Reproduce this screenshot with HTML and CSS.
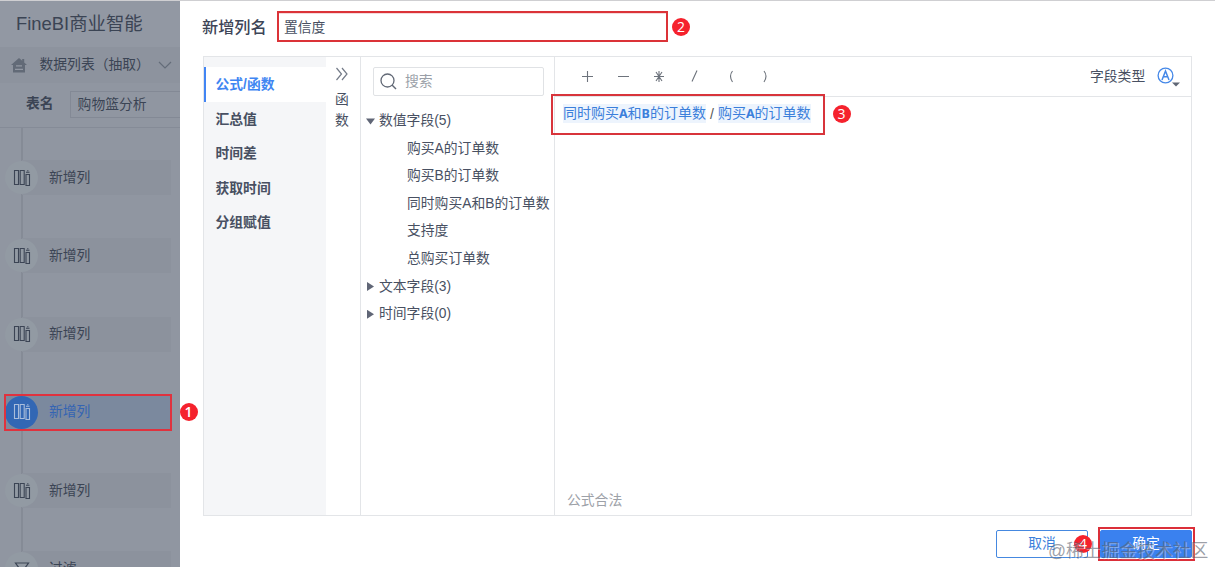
FILE: index.html
```html
<!DOCTYPE html>
<html lang="zh-CN">
<head>
<meta charset="utf-8">
<title>FineBI商业智能</title>
<link rel="stylesheet" href="styles.css">
</head>
<body>
<svg class="defs" aria-hidden="true">
  <symbol id="columns" viewBox="0 0 18 18"><path d="M1.500 1.500h4v14h-4zM7.200 1.500h4v14h-4zM13 5.500h3.500v11H13zM13 3.200h3.500M14.200 1.800h1.200" fill="none" stroke="currentColor" stroke-width="1.100"/></symbol>
</svg>
<div class="app">
  <aside class="sidebar">
    <div class="brand">FineBI商业智能</div>
    <div class="crumb">
      <svg class="home" viewBox="0 0 16 15"><path d="M8 0 0 7h2v7.500h12V7h2l-2.800-2.500V1h-2v1.800z" fill="currentColor"/><path d="M5 7.800h6M4 11.300h8" stroke="#9298a3" stroke-width="1.200"/></svg>
      <span class="crumb-text">数据列表（抽取）</span>
      <svg class="chev" viewBox="0 0 14 8"><path d="m1 1 6 6 6-6" fill="none" stroke="currentColor" stroke-width="1.200"/></svg>
    </div>
    <div class="table-name"><b>表名</b><span class="table-input">购物篮分析</span></div>
    <ul class="steps">
      <li><i><svg><use href="#columns"/></svg></i><span>新增列</span></li>
      <li><i><svg><use href="#columns"/></svg></i><span>新增列</span></li>
      <li><i><svg><use href="#columns"/></svg></i><span>新增列</span></li>
      <li class="active"><i><svg><use href="#columns"/></svg></i><span>新增列</span><em class="badge badge-1">1</em></li>
      <li><i><svg><use href="#columns"/></svg></i><span>新增列</span></li>
      <li><i><svg viewBox="0 0 18 18"><path d="M2.500 3h13L10.500 10v6l-3-2v-4z" fill="none" stroke="currentColor" stroke-width="1.200"/></svg></i><span>过滤</span></li>
    </ul>
  </aside>
  <main class="dialog">
    <header class="head"><h1>新增列名</h1><div class="name-input">置信度</div><em class="badge">2</em></header>
    <section class="panel">
      <nav class="menu">
        <a class="on">公式/函数</a><a>汇总值</a><a>时间差</a><a>获取时间</a><a>分组赋值</a>
      </nav>
      <div class="strip">
        <svg viewBox="0 0 14 14"><path d="m1.500 1 5 6-5 6M7 1l5 6-5 6" fill="none" stroke="currentColor" stroke-width="1.200"/></svg>
        <span>函</span><span>数</span>
      </div>
      <div class="fields">
        <div class="search"><svg viewBox="0 0 17 17"><circle cx="7.500" cy="7.500" r="6.500" fill="none" stroke="currentColor" stroke-width="1.300"/><path d="m12 12 4 4" stroke="currentColor" stroke-width="1.500"/></svg>搜索</div>
        <ul class="tree">
          <li><i class="open"></i>数值字段(5)</li>
          <li class="leaf">购买A的订单数</li>
          <li class="leaf">购买B的订单数</li>
          <li class="leaf">同时购买A和B的订单数</li>
          <li class="leaf">支持度</li>
          <li class="leaf">总购买订单数</li>
          <li><i class="closed"></i>文本字段(3)</li>
          <li><i class="closed"></i>时间字段(0)</li>
        </ul>
      </div>
      <div class="editor">
        <div class="toolbar">
          <svg class="ops" viewBox="0 0 214 20" fill="none" stroke="#6d737c" stroke-width="1.100"><path d="M12 9.500h11M17.500 4v11M48 9.500h11M84 9.500h10M86 5l6 9M92 5l-6 9M89 4v11M122 14.500l5-11"/><path d="M162.500 4q-4 5 0 11M194 4q4 5 0 11"/></svg>
          <span class="type">字段类型</span>
          <svg class="type-icon" viewBox="0 0 24 22"><circle cx="8.500" cy="8.500" r="7.400" fill="none" stroke="#4588e8" stroke-width="1.300"/><path d="m5 13 3.500-9L12 13M6.200 9.700h4.600" fill="none" stroke="#4588e8" stroke-width="1.500"/><path d="M15 15.500h8l-4 4z" fill="#606775"/></svg>
        </div>
        <div class="formula"><span>同时购买<b>A</b>和<b>B</b>的订单数</span><s>/</s><span>购买<b>A</b>的订单数</span></div>
        <div class="valid">公式合法</div>
        <div class="formula-mark"></div>
        <em class="badge badge-3">3</em>
      </div>
    </section>
    <footer class="actions">
      <button class="cancel">取消<em class="badge badge-4">4</em></button>
      <div class="ok-mark"><button class="ok">确定</button></div>
    </footer>
    <div class="watermark">@稀土掘金技术社区</div>
  </main>
</div>
</body>
</html>
```
FILE: styles.css
```css
* { box-sizing: border-box; }
body { margin: 0; overflow: hidden; font: 13.8px/20px "Liberation Sans", "Noto Sans CJK SC", sans-serif; color: #485062; }
ul { list-style: none; margin: 0; padding: 0; }
svg { display: block; flex: none; }
.defs { position: absolute; width: 0; height: 0; }
.app { display: flex; width: 1215px; height: 567px; border-top: 1px solid #cfcfd2; }

.sidebar { position: relative; z-index: 1; width: 180px; background: #9096a1; color: #3b4454; }
.brand { height: 46px; padding: 0 16px; font-size: 18.400px; line-height: 46px; background: #9298a3; white-space: nowrap; }
.crumb { height: 36px; display: flex; align-items: center; padding-left: 11px; background: #8d939e; }
.home { width: 16px; height: 15px; color: #626a77; }
.crumb-text { margin-left: 12.500px; width: 118px; white-space: nowrap; }
.chev { width: 14px; height: 8px; color: #646c79; }
.table-name { height: 45px; display: flex; align-items: center; padding-left: 26px; padding-bottom: 2px; border-bottom: 1px solid #858b97; }
.table-input { margin-left: 16px; flex: 1; height: 27px; padding-left: 7px; line-height: 25px; border: 1px solid #838995; border-right: 0; }
.steps { height: 438px; padding-top: 32px; display: flex; flex-direction: column; gap: 43.300px; overflow: visible; background: linear-gradient(#858b96, #858b96) 21px 0 / 2px 100% no-repeat; }
.steps li { flex: none; width: 166px; height: 35px; margin-left: 5px; display: flex; align-items: center; gap: 11px; background: linear-gradient(#8c929d, #8c929d) 17px 0 / 150px 35px no-repeat; }
.steps i { width: 33px; height: 33px; border-radius: 50%; background: #929aa3; display: flex; align-items: center; justify-content: center; }
.steps i svg { width: 18px; height: 18px; }
.steps .active { position: relative; background: #7b899e; color: #3464b3; outline: 2px solid #e0323e; outline-offset: -1px; }
.steps .active i { background: #3267b4; color: #a9bddb; }

.badge { display: block; width: 18px; height: 18px; border-radius: 50%; background: #f5222d; color: #fff; font: normal 14px/18px "Open Sans", sans-serif; text-align: center; }
.badge-1 { position: absolute; left: 174.500px; top: 8px; font-weight: 600; }
.badge-3 { position: absolute; left: 277.500px; top: 48px; }
.badge-4 { position: absolute; left: 77px; top: 4px; }

.dialog { position: relative; width: 1035px; padding: 10px 23px 0; background: #fff; }
.head { display: flex; align-items: center; height: 31px; margin-left: -1px; }
.head h1 { margin: 0; width: 75px; font-size: 16.200px; font-weight: 500; color: #3d4557; }
.name-input { width: 391px; height: 31px; padding-left: 5px; line-height: 29px; border: 2px solid #db3338; box-shadow: inset 0 1px #f6d9db; }
.head .badge { margin-left: 4px; }
.panel { display: flex; width: 989px; height: 460px; margin-top: 14px; border: 1px solid #e3e5e8; }
.menu { width: 122px; padding-top: 10px; background: #f5f6f8; }
.menu a { display: block; height: 34.500px; padding-left: 11.500px; line-height: 36px; font-weight: 600; }
.menu .on { color: #3f86f2; background: #fff; padding-left: 9.500px; border-left: 2px solid #4285f4; }
.strip { width: 35px; padding: 10px 2px 0 0; display: flex; flex-direction: column; align-items: center; border-right: 1px solid #e3e5e8; }
.strip svg { width: 14px; height: 14px; margin-bottom: 9px; color: #747b88; }
.strip span { height: 20.500px; line-height: 20px; }
.fields { width: 194px; padding-top: 10px; border-right: 1px solid #e3e5e8; }
.search { display: flex; align-items: center; gap: 8px; width: 171px; height: 29px; margin-left: 12px; padding-left: 6px; border: 1px solid #e0e2e5; border-radius: 2px; color: #9a9fa8; }
.search svg { width: 17px; height: 17px; color: #626976; }
.tree { padding-top: 11.200px; }
.tree li { height: 27.600px; display: flex; align-items: center; padding-left: 5px; white-space: nowrap; }
.tree .leaf { padding-left: 46px; }
.tree i { width: 9px; margin-right: 4px; height: 9px; background: #606676; }
.open { clip-path: polygon(0 2px, 100% 2px, 50% 8px); }
.closed { clip-path: polygon(1px 0, 8px 50%, 1px 100%); }
.editor { position: relative; flex: 1; display: flex; flex-direction: column; }
.toolbar { display: flex; align-items: center; height: 40px; padding-left: 15px; border-bottom: 1px solid #e3e5e8; }
.ops { width: 214px; height: 20px; }
.type { margin-left: 306px; padding-top: 1px; }
.type-icon { width: 24px; height: 22px; margin: 2px 0 0 12px; }
.formula { display: flex; align-items: center; height: 33px; padding-left: 8px; color: #3b7fdb; font-size: 14px; }
.formula span { height: 19px; line-height: 19px; background: #edf4fd; white-space: nowrap; }
.formula b { display: inline-block; width: 8.500px; text-align: center; font: bold 12.500px/18px "Noto Sans", sans-serif; }
.formula s { width: 12px; text-align: center; color: #555; text-decoration: none; }
.formula-mark { position: absolute; left: -4px; top: 37px; width: 274px; height: 41px; border: 2px solid #d8343b; }
.valid { margin: auto 0 4px 12px; color: #9da1a8; }
.actions { display: flex; justify-content: flex-end; align-items: center; height: 34px; margin: 11px -3px 0 0; gap: 10px; }
button { width: 92px; height: 28px; padding: 0; border: 1px solid #4588e0; border-radius: 2px; font: inherit; }
.cancel { position: relative; background: #fff; color: #3b7fdb; }
.ok-mark { width: 97px; height: 34px; border: 2px solid #db2f39; padding: 1px 0 0; }
.ok { background: #3a81ef; border-color: #3a81ef; color: #fff; width: 92px; height: 28px; }
.watermark { position: absolute; left: 868px; top: 537px; font-size: 17.800px; line-height: 26px; color: rgba(90, 96, 110, .6); text-shadow: 1px 1px rgba(255, 255, 255, .35); white-space: nowrap; }
```
